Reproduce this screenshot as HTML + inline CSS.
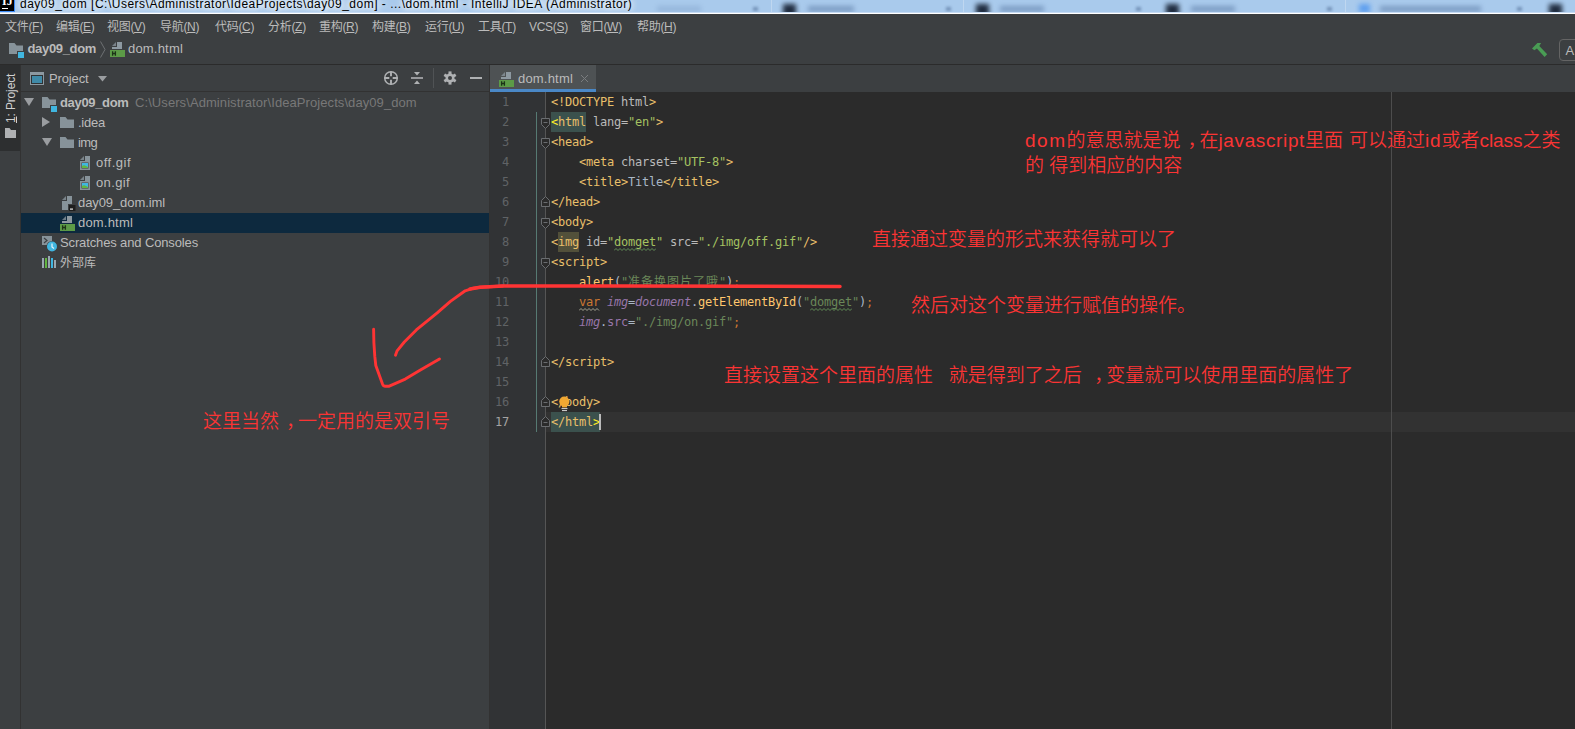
<!DOCTYPE html>
<html lang="zh">
<head>
<meta charset="UTF-8">
<title>day09_dom - dom.html - IntelliJ IDEA</title>
<style>
html,body{margin:0;padding:0;}
body{width:1575px;height:729px;overflow:hidden;position:relative;background:#3c3f41;
  font-family:"Liberation Sans","Noto Sans CJK SC",sans-serif;font-size:13px;color:#bbbbbb;}
.abs{position:absolute;white-space:pre;}
#win{position:absolute;left:0;top:0;width:1575px;height:729px;overflow:hidden;}

/* ---------- title bar ---------- */
#titlebar{position:absolute;left:0;top:0;width:1575px;height:14px;background:#a9caec;overflow:hidden;}
#titlebar .edge{position:absolute;left:0;top:12px;width:1575px;height:2px;background:linear-gradient(#c6dbf3 0,#c6dbf3 50%,#ffffff 50%);}
#titletext{position:absolute;left:20px;top:-4px;font-size:12px;letter-spacing:0.5px;line-height:16px;color:#000;white-space:pre;
  text-shadow:0 0 6px #fff,0 0 6px #fff,0 0 10px #fff;}
#ijlogo{position:absolute;left:0;top:0;width:14px;height:11px;background:#000;}
.blob{position:absolute;filter:blur(1.5px);}

/* ---------- menu ---------- */
#menubar{position:absolute;left:0;top:14px;width:1575px;height:24px;background:#3c3f41;}
#menubar span.m{letter-spacing:-0.3px;position:absolute;top:5px;line-height:16px;font-size:12px;color:#bbbbbb;white-space:pre;}
#menubar u{text-decoration:underline;text-underline-offset:1px;}

/* ---------- nav bar ---------- */
#navbar{position:absolute;left:0;top:38px;width:1575px;height:26px;background:#3c3f41;}
#navline{position:absolute;left:0;top:64px;width:1575px;height:1px;background:#2b2b2b;}

/* ---------- left stripe ---------- */
#stripe{position:absolute;left:0;top:65px;width:20px;height:664px;background:#3c3f41;}
#stripeline{position:absolute;left:20px;top:65px;width:1px;height:664px;background:#323232;}
#stripetab{position:absolute;left:0;top:65px;width:20px;height:86px;background:#2d2f30;}

/* ---------- project panel ---------- */
#proj{position:absolute;left:21px;top:65px;width:468px;height:664px;background:#3c3f41;}
#projhead{position:absolute;left:0;top:0;width:468px;height:26px;}
#projline{position:absolute;left:0;top:26px;width:468px;height:1px;background:#323232;}
.row{position:absolute;left:0;width:468px;height:20px;}
.row .t{position:absolute;top:3px;line-height:16px;font-size:13px;white-space:pre;color:#bbbbbb;}
#selrow{position:absolute;left:0;top:148px;width:468px;height:20px;background:#0d293e;}

/* ---------- editor ---------- */
#edtabs{position:absolute;left:489px;top:65px;width:1086px;height:27px;background:#3c3f41;}
#edtab{position:absolute;left:1px;top:0;width:106px;height:27px;background:#4e5254;}
#edtabline{position:absolute;left:1px;top:24px;width:106px;height:3px;background:#4a88c7;}
#gutter{position:absolute;left:490px;top:92px;width:55px;height:637px;background:#313335;}
#gutline{position:absolute;left:545px;top:92px;width:1px;height:637px;background:#555555;}
#editor{position:absolute;left:546px;top:92px;width:1029px;height:637px;background:#2b2b2b;}
#caretrow{position:absolute;left:546px;top:412px;width:1029px;height:20px;background:#323232;}
#margin{position:absolute;left:1391px;top:92px;width:1px;height:637px;background:#4d4d4d;}
.ln{position:absolute;left:489px;width:20px;text-align:right;font-family:"DejaVu Sans Mono","Liberation Mono",monospace;
  font-size:12px;line-height:20px;color:#606366;letter-spacing:-0.22px;}
.code{position:absolute;left:551px;font-family:"DejaVu Sans Mono","Liberation Mono","Noto Sans CJK SC",monospace;
  font-size:12px;line-height:20px;height:20px;white-space:pre;color:#a9b7c6;letter-spacing:-0.225px;}
.tg{color:#e8bf6a;} .at{color:#bababa;} .sv{color:#a5c261;} .kw{color:#cc7832;} .js{color:#6a8759;}
.pu{color:#9876aa;} .it{font-style:italic;color:#9876aa;} .fn{color:#ffc66d;}
.hl{background:#3b514d;display:inline-block;height:20px;}
.hl2{background:#52503a;display:inline-block;height:20px;}
.cjk{letter-spacing:1px;}


/* ---------- red notes ---------- */
.note{position:absolute;white-space:pre;font-family:"Liberation Sans","Noto Sans CJK SC",sans-serif;
  font-size:19px;line-height:25px;color:#fa3434;font-weight:350;}
.cm{position:relative;left:7px;}
</style>
</head>
<body>
<div id="win">

<!-- title bar -->
<div id="titlebar">
  <div id="titletext">day09_dom [C:\Users\Administrator\IdeaProjects\day09_dom] - ...\dom.html - IntelliJ IDEA (Administrator)</div>
  <div id="ijlogo"><span class="abs" style="left:2px;top:-5px;font-family:'Liberation Serif',serif;font-weight:bold;font-size:12px;line-height:12px;color:#fff;letter-spacing:0;">IJ</span><div class="abs" style="left:2px;top:8px;width:6px;height:1px;background:#fff;"></div></div><div class="abs" style="left:14px;top:0;width:1px;height:12px;background:#3d8bf5;"></div><div class="abs" style="left:0;top:11px;width:15px;height:1px;background:#3d8bf5;"></div>
  <div class="blob" style="left:783px;top:4px;width:13px;height:12px;background:#101a2b;filter:blur(2.4px);opacity:0.9;"></div>
  <div class="blob" style="left:976px;top:4px;width:13px;height:12px;background:#101a2b;filter:blur(2.4px);opacity:0.9;"></div>
  <div class="blob" style="left:1166px;top:4px;width:13px;height:12px;background:#101a2b;filter:blur(2.4px);opacity:0.9;"></div>
  <div class="blob" style="left:1549px;top:4px;width:13px;height:12px;background:#101a2b;filter:blur(2.4px);opacity:0.9;"></div>
  <div class="blob" style="left:808px;top:6px;width:46px;height:6px;background:#5f7ea8;filter:blur(2.4px);opacity:0.6;"></div>
  <div class="blob" style="left:1000px;top:6px;width:44px;height:6px;background:#5f7ea8;filter:blur(2.4px);opacity:0.6;"></div>
  <div class="blob" style="left:1191px;top:6px;width:44px;height:6px;background:#5f7ea8;filter:blur(2.4px);opacity:0.6;"></div>
  <div class="blob" style="left:1380px;top:6px;width:101px;height:6px;background:#5f7ea8;filter:blur(2.4px);opacity:0.6;"></div>
  <div class="blob" style="left:1359px;top:4px;width:11px;height:9px;background:#3f8df0;filter:blur(2.4px);opacity:0.7;"></div>
  <div class="blob" style="left:657px;top:6px;width:44px;height:6px;background:#7f9fc7;filter:blur(2.4px);opacity:0.45;"></div>
  <div class="blob" style="left:753px;top:7px;width:5px;height:4px;background:#4d6b93;filter:blur(1.6px);opacity:0.6;"></div>
  <div class="blob" style="left:946px;top:7px;width:5px;height:4px;background:#4d6b93;filter:blur(1.6px);opacity:0.6;"></div>
  <div class="blob" style="left:1136px;top:7px;width:5px;height:4px;background:#4d6b93;filter:blur(1.6px);opacity:0.6;"></div>
  <div class="blob" style="left:1327px;top:7px;width:5px;height:4px;background:#4d6b93;filter:blur(1.6px);opacity:0.6;"></div>
  <div class="blob" style="left:1517px;top:7px;width:5px;height:4px;background:#4d6b93;filter:blur(1.6px);opacity:0.6;"></div>
  <div class="blob" style="left:771px;top:0px;width:1px;height:13px;background:#d5e4f5;filter:blur(0.6px);opacity:0.5;"></div>
  <div class="blob" style="left:963px;top:0px;width:1px;height:13px;background:#d5e4f5;filter:blur(0.6px);opacity:0.5;"></div>
  <div class="blob" style="left:1345px;top:0px;width:1px;height:13px;background:#d5e4f5;filter:blur(0.6px);opacity:0.5;"></div>
  <div class="edge"></div>
</div>

<!-- menu bar -->
<div id="menubar">
  <span class="m" style="left:5px">文件(<u>F</u>)</span>
  <span class="m" style="left:56px">编辑(<u>E</u>)</span>
  <span class="m" style="left:107px">视图(<u>V</u>)</span>
  <span class="m" style="left:160px">导航(<u>N</u>)</span>
  <span class="m" style="left:215px">代码(<u>C</u>)</span>
  <span class="m" style="left:268px">分析(<u>Z</u>)</span>
  <span class="m" style="left:319px">重构(<u>R</u>)</span>
  <span class="m" style="left:372px">构建(<u>B</u>)</span>
  <span class="m" style="left:425px">运行(<u>U</u>)</span>
  <span class="m" style="left:478px">工具(<u>T</u>)</span>
  <span class="m" style="left:529px">VCS(<u>S</u>)</span>
  <span class="m" style="left:580px">窗口(<u>W</u>)</span>
  <span class="m" style="left:637px">帮助(<u>H</u>)</span>
</div>

<!-- nav bar -->
<div id="navbar">
  <svg class="abs" style="left:9px;top:5px" width="16" height="15" viewBox="0 0 16 15"><path d="M0 0H5.5L7.5 2.5H14V8H8V11H0Z" fill="#87939a"/><rect x="9" y="9" width="6" height="6" fill="#40b6e0"/></svg><svg class="abs" style="left:99px;top:3px" width="8" height="17" viewBox="0 0 8 17"><path d="M1.5 0.5L6 8.5L1.5 16.5" stroke="#6e7173" stroke-width="1" fill="none"/></svg><svg class="abs" style="left:110px;top:4px" width="15" height="15" viewBox="0 0 15 15"><path d="M7 0H12V7H2V5H7Z" fill="#8d99a1"/><path d="M6 0V4H2Z" fill="#8d99a1" opacity=".75"/><rect x="0" y="8" width="15" height="7" fill="#5c9b47"/><path d="M2.6 9.2V13.8M5.4 9.2V13.8M2.6 11.5H5.4" stroke="#1c3317" stroke-width="1.3" fill="none"/></svg><svg class="abs" style="left:1531px;top:4px" width="17" height="16" viewBox="0 0 17 16"><path d="M1 6.5L6.4 0.9L10.1 1.1L8.3 4.1L16.2 12.3L13.6 15.1L5.9 6.5L3.4 8.3Z" fill="#499c54"/></svg><div class="abs" style="left:1559px;top:1px;width:30px;height:22px;border:1px solid #646464;border-radius:4px;box-sizing:border-box;"></div><span class="abs" style="left:1565.5px;top:5px;line-height:16px;font-size:13px;">A</span>
  <span class="abs" style="left:27.5px;top:3px;line-height:16px;font-weight:bold;letter-spacing:-.33px;">day09_dom</span>
  <span class="abs" style="left:128px;top:3px;line-height:16px;letter-spacing:.19px;">dom.html</span>
</div>
<div id="navline"></div>

<!-- left stripe -->
<div id="stripe"></div>
<div id="stripetab"><span class="abs" style="left:3px;top:58px;line-height:16px;font-size:12px;letter-spacing:-.15px;color:#d0d0d0;transform-origin:0 0;transform:rotate(-90deg);width:52px;"><u>1</u>: Project</span><svg class="abs" style="left:5px;top:63px" width="11" height="10" viewBox="0 0 11 10"><path d="M0 0H4.5L6 2H11V10H0Z" fill="#afb1b3"/></svg></div>
<div id="stripeline"></div>

<!-- project panel -->
<div id="proj">
  <div id="projhead">
    <svg class="abs" style="left:9px;top:7px" width="14" height="13" viewBox="0 0 14 13"><rect x="0" y="0" width="14" height="13" fill="#8c98a0"/><rect x="1" y="3" width="12" height="9" fill="#2f3234"/><rect x="2" y="4" width="10" height="7" fill="#3f8aa8"/></svg><svg class="abs" style="left:77px;top:11px" width="9" height="6" viewBox="0 0 9 6"><path d="M0 0H9L4.5 5.5Z" fill="#9a9da0"/></svg><svg class="abs" style="left:362px;top:5px" width="16" height="16" viewBox="0 0 16 16"><circle cx="8" cy="8" r="6.3" stroke="#afb1b3" stroke-width="1.5" fill="none"/><path d="M8 1.5V6.3M8 9.7V14.5M1.5 8H6.3M9.7 8H14.5" stroke="#afb1b3" stroke-width="1.9"/></svg><svg class="abs" style="left:389px;top:6px" width="14" height="14" viewBox="0 0 14 14"><path d="M1 7H13" stroke="#afb1b3" stroke-width="1.6"/><path d="M4 1H10L7 4.5Z M4 13H10L7 9.5Z" fill="#afb1b3"/></svg><div class="abs" style="left:412px;top:3px;width:1px;height:20px;background:#505355;"></div><svg class="abs" style="left:422px;top:6px" width="14" height="14" viewBox="0 0 14 14"><g fill="#afb1b3"><circle cx="7" cy="7" r="4.5"/><rect x="5.5" y="0.4" width="3" height="13.2"/><rect x="5.5" y="0.4" width="3" height="13.2" transform="rotate(60 7 7)"/><rect x="5.5" y="0.4" width="3" height="13.2" transform="rotate(120 7 7)"/></g><circle cx="7" cy="7" r="2" fill="#3c3f41"/></svg><div class="abs" style="left:449px;top:12px;width:12px;height:2px;background:#afb1b3;"></div>
    <span class="abs" style="left:28px;top:6px;line-height:16px;letter-spacing:-.14px;">Project</span>
  </div>
  <div id="projline"></div>
  <div id="selrow"></div>
  <div class="row" style="top:27px"><svg class="abs" style="left:3px;top:6px" width="10" height="8" viewBox="0 0 10 8"><path d="M0 0H10L5 8Z" fill="#9a9da0"/></svg><svg class="abs" style="left:21px;top:5px" width="16" height="15" viewBox="0 0 16 15"><path d="M0 0H5.5L7.5 2.5H14V8H8V11H0Z" fill="#87939a"/><rect x="9" y="9" width="6" height="6" fill="#40b6e0"/></svg><span class="t" style="left:39px;font-weight:bold;letter-spacing:-.33px;">day09_dom</span><span class="t" style="left:114px;color:#787878;letter-spacing:.08px;">C:\Users\Administrator\IdeaProjects\day09_dom</span></div>
  <div class="row" style="top:47px"><svg class="abs" style="left:21px;top:5px" width="8" height="10" viewBox="0 0 8 10"><path d="M0 0V10L8 5Z" fill="#9a9da0"/></svg><svg class="abs" style="left:39px;top:5px" width="14" height="11" viewBox="0 0 14 11"><path d="M0 0H5.5L7.5 2.5H14V11H0Z" fill="#87939a"/></svg><span class="t" style="left:57px;letter-spacing:-.24px">.idea</span></div>
  <div class="row" style="top:67px"><svg class="abs" style="left:21px;top:6px" width="10" height="8" viewBox="0 0 10 8"><path d="M0 0H10L5 8Z" fill="#9a9da0"/></svg><svg class="abs" style="left:39px;top:5px" width="14" height="11" viewBox="0 0 14 11"><path d="M0 0H5.5L7.5 2.5H14V11H0Z" fill="#87939a"/></svg><span class="t" style="left:57px;letter-spacing:-.6px">img</span></div>
  <div class="row" style="top:87px"><svg class="abs" style="left:59px;top:4px" width="10" height="14" viewBox="0 0 10 14"><path d="M5 0H10V14H0V5H5Z" fill="#87939a"/><path d="M4 0V4H0Z" fill="#87939a" opacity=".8"/><rect x="1.5" y="6.5" width="7" height="6" fill="#3c3f41"/><rect x="2" y="7" width="6" height="5" fill="#40b6e0"/><path d="M2 12V10Q4 8.5 6 10L8 11V12Z" fill="#62b543"/></svg><span class="t" style="left:75px;letter-spacing:.49px">off.gif</span></div>
  <div class="row" style="top:107px"><svg class="abs" style="left:59px;top:4px" width="10" height="14" viewBox="0 0 10 14"><path d="M5 0H10V14H0V5H5Z" fill="#87939a"/><path d="M4 0V4H0Z" fill="#87939a" opacity=".8"/><rect x="1.5" y="6.5" width="7" height="6" fill="#3c3f41"/><rect x="2" y="7" width="6" height="5" fill="#40b6e0"/><path d="M2 12V10Q4 8.5 6 10L8 11V12Z" fill="#62b543"/></svg><span class="t" style="left:75px;letter-spacing:.37px">on.gif</span></div>
  <div class="row" style="top:127px"><svg class="abs" style="left:41px;top:4px" width="14" height="15" viewBox="0 0 14 15"><path d="M5 0H10V8H6V14H0V5H5Z" fill="#87939a"/><path d="M4 0V4H0Z" fill="#87939a" opacity=".8"/><rect x="7" y="9" width="6.5" height="6" fill="#1e1e1e"/><rect x="8" y="12.5" width="3" height="1.2" fill="#e8e8e8"/></svg><span class="t" style="left:57px;letter-spacing:-.09px">day09_dom.iml</span></div>
  <div class="row sel" style="top:147px"><svg class="abs" style="left:39px;top:4px" width="15" height="15" viewBox="0 0 15 15"><path d="M7 0H12V7H2V5H7Z" fill="#8d99a1"/><path d="M6 0V4H2Z" fill="#8d99a1" opacity=".75"/><rect x="0" y="8" width="15" height="7" fill="#5c9b47"/><path d="M2.6 9.2V13.8M5.4 9.2V13.8M2.6 11.5H5.4" stroke="#1c3317" stroke-width="1.3" fill="none"/></svg><span class="t" style="left:57px;letter-spacing:.19px">dom.html</span></div>
  <div class="row" style="top:167px"><svg class="abs" style="left:21px;top:4px" width="16" height="16" viewBox="0 0 16 16"><rect x="0" y="0" width="10" height="9" fill="#87939a"/><path d="M2 2L5 4.5L2 7" stroke="#3c3f41" stroke-width="1.2" fill="none"/><circle cx="10" cy="10.5" r="5.5" fill="#3c3f41"/><circle cx="10" cy="10.5" r="5" fill="#40b6e0"/><path d="M10 7.5V11L12 12.5" stroke="#e9f5fb" stroke-width="1.2" fill="none"/></svg><span class="t" style="left:39px;letter-spacing:-.13px">Scratches and Consoles</span></div>
  <div class="row" style="top:187px"><svg class="abs" style="left:21px;top:4px" width="15" height="13" viewBox="0 0 15 13"><rect x="0" y="2" width="2" height="10" fill="#9aa7b0"/><rect x="3" y="2" width="2" height="10" fill="#62b543"/><rect x="6" y="0" width="2" height="12" fill="#9aa7b0"/><rect x="9" y="2" width="2" height="10" fill="#40b6e0"/><rect x="12" y="4" width="2" height="8" fill="#9aa7b0"/></svg><span class="t" style="left:39px;font-size:12px">外部库</span></div>
</div>

<!-- editor -->
<div id="edtabs">
  <div id="edtab"><svg class="abs" style="left:9px;top:7px" width="15" height="15" viewBox="0 0 15 15"><path d="M7 0H12V7H2V5H7Z" fill="#8d99a1"/><path d="M6 0V4H2Z" fill="#8d99a1" opacity=".75"/><rect x="0" y="8" width="15" height="7" fill="#5c9b47"/><path d="M2.6 9.2V13.8M5.4 9.2V13.8M2.6 11.5H5.4" stroke="#1c3317" stroke-width="1.3" fill="none"/></svg><svg class="abs" style="left:90px;top:9px" width="9" height="9" viewBox="0 0 9 9"><path d="M1 1L8 8M8 1L1 8" stroke="#7a7d7f" stroke-width="1"/></svg><span class="abs" style="left:28px;top:6px;line-height:16px;letter-spacing:.19px;">dom.html</span></div>
  <div id="edtabline"></div>
</div>
<div class="abs" style="left:489px;top:65px;width:1px;height:664px;background:#323232;"></div>
<div id="gutter"></div>
<div id="editor"></div>
<div id="caretrow"></div>
<div id="gutline"></div>
<div id="margin"></div>
<div class="ln" style="top:92px">1</div>
<div class="ln" style="top:112px">2</div>
<div class="ln" style="top:132px">3</div>
<div class="ln" style="top:152px">4</div>
<div class="ln" style="top:172px">5</div>
<div class="ln" style="top:192px">6</div>
<div class="ln" style="top:212px">7</div>
<div class="ln" style="top:232px">8</div>
<div class="ln" style="top:252px">9</div>
<div class="ln" style="top:272px">10</div>
<div class="ln" style="top:292px">11</div>
<div class="ln" style="top:312px">12</div>
<div class="ln" style="top:332px">13</div>
<div class="ln" style="top:352px">14</div>
<div class="ln" style="top:372px">15</div>
<div class="ln" style="top:392px">16</div>
<div class="ln" style="top:412px;color:#a4a3a3">17</div>
<div class="code" style="top:92px"><span class="tg">&lt;!DOCTYPE </span><span class="at">html</span><span class="tg">&gt;</span></div>
<div class="code" style="top:112px"><span class="tg hl"><span style="color:#ffef28">&lt;</span>html</span><span class="at"> lang=</span><span class="sv">"en"</span><span class="tg">&gt;</span></div>
<div class="code" style="top:132px"><span class="tg">&lt;head&gt;</span></div>
<div class="code" style="top:152px">    <span class="tg">&lt;meta</span><span class="at"> charset=</span><span class="sv">"UTF-8"</span><span class="tg">&gt;</span></div>
<div class="code" style="top:172px">    <span class="tg">&lt;title&gt;</span>Title<span class="tg">&lt;/title&gt;</span></div>
<div class="code" style="top:192px"><span class="tg">&lt;/head&gt;</span></div>
<div class="code" style="top:212px"><span class="tg">&lt;body&gt;</span></div>
<div class="code" style="top:232px"><span class="tg">&lt;<span class="hl2">img</span></span><span class="at"> id=</span><span class="sv">"<span class="wavy">domget</span>"</span><span class="at"> src=</span><span class="sv">"./img/off.gif"</span><span class="tg">/&gt;</span></div>
<div class="code" style="top:252px"><span class="tg">&lt;script&gt;</span></div>
<div class="code" style="top:272px">    <span class="fn">alert</span>(<span class="js">"<span class="cjk">准备换图片了哦</span>"</span>)<span class="kw">;</span></div>
<div class="code" style="top:292px">    <span class="kw wavy2">var</span> <span class="it">img</span>=<span class="it">document</span>.<span class="fn">getElementById</span>(<span class="js">"<span class="wavy">domget</span>"</span>)<span class="kw">;</span></div>
<div class="code" style="top:312px">    <span class="it">img</span>.<span class="pu">src</span>=<span class="js">"./img/on.gif"</span><span class="kw">;</span></div>
<div class="code" style="top:352px"><span class="tg">&lt;/script&gt;</span></div>
<div class="code" style="top:392px"><span class="tg">&lt;/body&gt;</span></div>
<div class="code" style="top:412px"><span class="tg hl">&lt;/html<span style="color:#ffef28">&gt;</span></span></div>
<div class="abs" style="left:536px;top:112px;width:1px;height:320px;background:#567a73;"></div>
<svg class="abs" style="left:540px;top:117px" width="11" height="13" viewBox="0 0 11 13"><path d="M1.5 1.5H9.5V7.5L5.5 11.5L1.5 7.5Z" fill="#2b2b2b" stroke="#6a6d70" stroke-width="1"/><path d="M3.5 5.5H7.5" stroke="#6a6d70" stroke-width="1"/></svg>
<svg class="abs" style="left:540px;top:137px" width="11" height="13" viewBox="0 0 11 13"><path d="M1.5 1.5H9.5V7.5L5.5 11.5L1.5 7.5Z" fill="#2b2b2b" stroke="#6a6d70" stroke-width="1"/><path d="M3.5 5.5H7.5" stroke="#6a6d70" stroke-width="1"/></svg>
<svg class="abs" style="left:540px;top:217px" width="11" height="13" viewBox="0 0 11 13"><path d="M1.5 1.5H9.5V7.5L5.5 11.5L1.5 7.5Z" fill="#2b2b2b" stroke="#6a6d70" stroke-width="1"/><path d="M3.5 5.5H7.5" stroke="#6a6d70" stroke-width="1"/></svg>
<svg class="abs" style="left:540px;top:257px" width="11" height="13" viewBox="0 0 11 13"><path d="M1.5 1.5H9.5V7.5L5.5 11.5L1.5 7.5Z" fill="#2b2b2b" stroke="#6a6d70" stroke-width="1"/><path d="M3.5 5.5H7.5" stroke="#6a6d70" stroke-width="1"/></svg>
<svg class="abs" style="left:540px;top:195px" width="11" height="13" viewBox="0 0 11 13"><path d="M1.5 11.5H9.5V5.5L5.5 1.5L1.5 5.5Z" fill="#2b2b2b" stroke="#6a6d70" stroke-width="1"/><path d="M3.5 7.5H7.5" stroke="#6a6d70" stroke-width="1"/></svg>
<svg class="abs" style="left:540px;top:355px" width="11" height="13" viewBox="0 0 11 13"><path d="M1.5 11.5H9.5V5.5L5.5 1.5L1.5 5.5Z" fill="#2b2b2b" stroke="#6a6d70" stroke-width="1"/><path d="M3.5 7.5H7.5" stroke="#6a6d70" stroke-width="1"/></svg>
<svg class="abs" style="left:540px;top:395px" width="11" height="13" viewBox="0 0 11 13"><path d="M1.5 11.5H9.5V5.5L5.5 1.5L1.5 5.5Z" fill="#2b2b2b" stroke="#6a6d70" stroke-width="1"/><path d="M3.5 7.5H7.5" stroke="#6a6d70" stroke-width="1"/></svg>
<svg class="abs" style="left:540px;top:415px" width="11" height="13" viewBox="0 0 11 13"><path d="M1.5 11.5H9.5V5.5L5.5 1.5L1.5 5.5Z" fill="#2b2b2b" stroke="#6a6d70" stroke-width="1"/><path d="M3.5 7.5H7.5" stroke="#6a6d70" stroke-width="1"/></svg>
<svg class="abs" style="left:559px;top:396px" width="11" height="16" viewBox="0 0 11 16"><circle cx="5.3" cy="5.6" r="5.1" fill="#f0a732"/><rect x="3" y="9" width="5" height="2.4" fill="#f0a732"/><rect x="2.5" y="12" width="6" height="1.1" fill="#c8c8c8"/><rect x="3" y="14" width="5" height="1.1" fill="#c8c8c8"/></svg>
<div class="abs" style="left:599px;top:414px;width:2px;height:16px;background:#bbbbbb;"></div>

<svg class="abs" style="left:614px;top:248px" width="42" height="3" viewBox="0 0 42 3"><polyline points="0,2.5 2,0.5 4,2.5 6,0.5 8,2.5 10,0.5 12,2.5 14,0.5 16,2.5 18,0.5 20,2.5 22,0.5 24,2.5 26,0.5 28,2.5 30,0.5 32,2.5 34,0.5 36,2.5 38,0.5 40,2.5 42,0.5" fill="none" stroke="#6a9a5e" stroke-width="0.9"/></svg>
<svg class="abs" style="left:579px;top:308px" width="21" height="3" viewBox="0 0 21 3"><polyline points="0,2.5 2,0.5 4,2.5 6,0.5 8,2.5 10,0.5 12,2.5 14,0.5 16,2.5 18,0.5 20,2.5" fill="none" stroke="#b5b39f" stroke-width="0.9"/></svg>
<svg class="abs" style="left:810px;top:308px" width="42" height="3" viewBox="0 0 42 3"><polyline points="0,2.5 2,0.5 4,2.5 6,0.5 8,2.5 10,0.5 12,2.5 14,0.5 16,2.5 18,0.5 20,2.5 22,0.5 24,2.5 26,0.5 28,2.5 30,0.5 32,2.5 34,0.5 36,2.5 38,0.5 40,2.5 42,0.5" fill="none" stroke="#6a9a5e" stroke-width="0.9"/></svg>
<!-- red annotations -->
<div class="note" style="left:1025px;top:127.5px;"><span style="letter-spacing:1.5px">dom</span>的意思就是说<span class="cm">，</span>在<span style="letter-spacing:.62px">javascript</span>里面<span style="letter-spacing:.8px"> </span>可以通过<span style="letter-spacing:.8px">id</span>或者<span style="letter-spacing:-.06px">class</span>之类
的 得到相应的内容</div>
<div class="note" style="left:872px;top:226.5px;">直接通过变量的形式来获得就可以了</div>
<div class="note" style="left:911px;top:292.5px;">然后对这个变量进行赋值的操作。</div>
<div class="note" style="left:724px;top:362.5px;">直接设置这个里面的属性   就是得到了之后 <span class="cm">，</span>变量就可以使用里面的属性了</div>
<div class="note" style="left:203px;top:408.5px;">这里当然<span class="cm">，</span>一定用的是双引号</div>
<svg class="abs" style="left:360px;top:270px" width="500" height="130" viewBox="360 270 500 130">
  <path d="M840 286.4 L760 286.2 L620 286 L503 286 L480 287.3 L470 288.9" fill="none" stroke="#ff3434" stroke-width="3.5" stroke-linecap="round" stroke-linejoin="round"/>
  <path d="M503 286 L480 287.3 L473.4 288.2 L465.2 290.8 L450.4 301.4 L437.2 312.9 L416.3 329.9 L404.3 342 L397.1 350.8 L395.5 355.2"
    fill="none" stroke="#ff3434" stroke-width="2.9" stroke-linecap="round" stroke-linejoin="round"/>
  <path d="M373.6 329.2 L373.9 342.8 L374.8 356.4 L375.8 365.5 L379.6 376 L382.6 384.3 Q383.5 386.3 384.9 386.3 L388.7 386.3 L405.3 379.1 L420.4 370 L439.5 359"
    fill="none" stroke="#ff3434" stroke-width="2.9" stroke-linecap="round" stroke-linejoin="round"/>
</svg>

</div>
</body>
</html>
